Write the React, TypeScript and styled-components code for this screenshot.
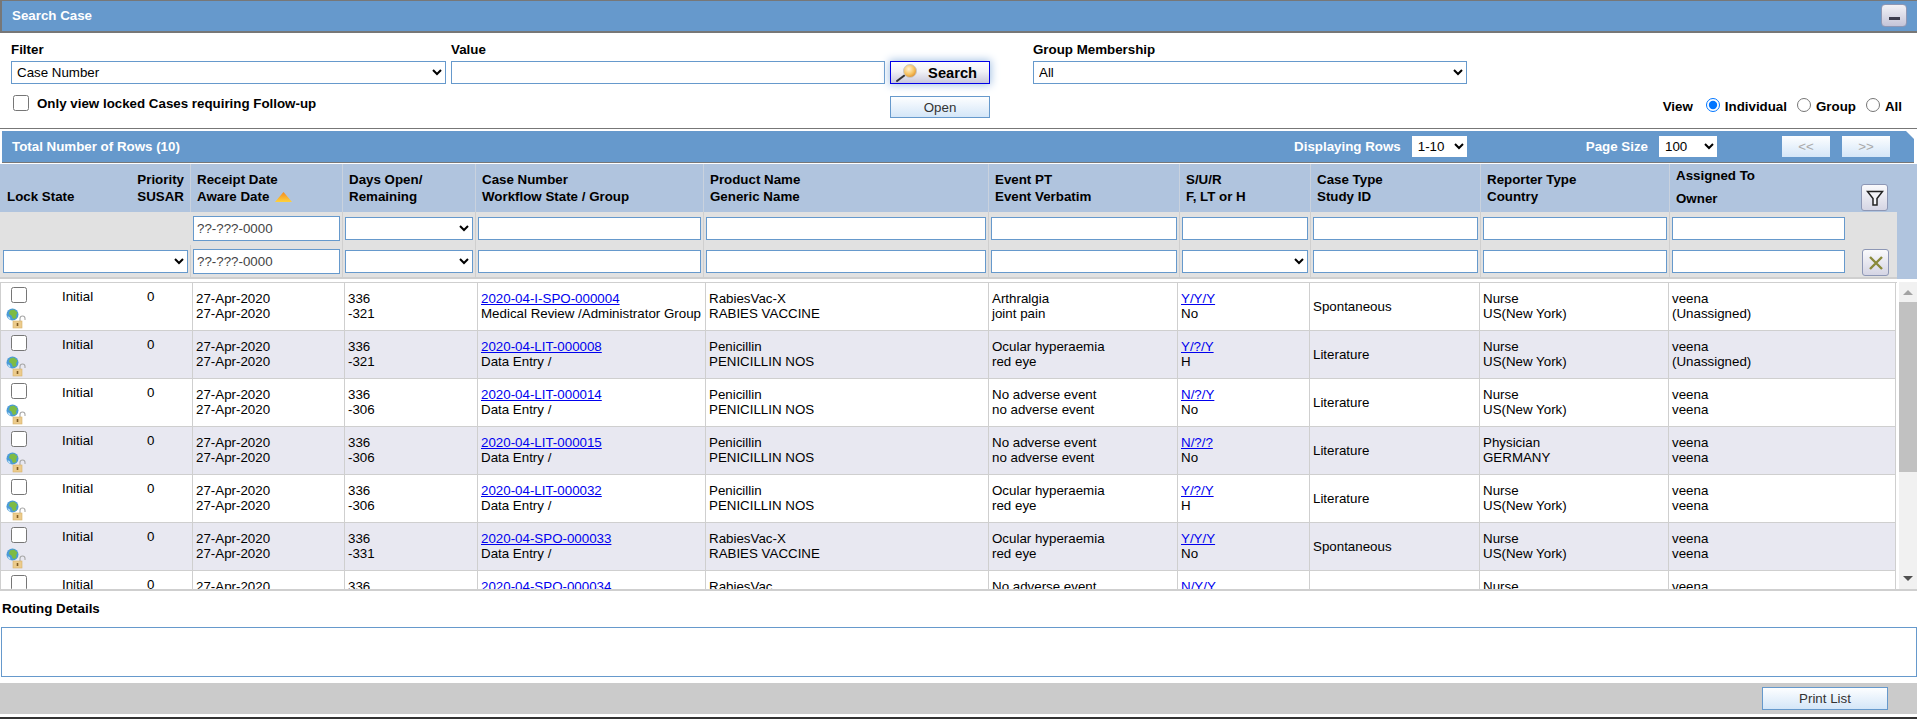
import { FC } from 'react'

import styled, { createGlobalStyle } from 'styled-components'

const HEAD_COLUMNS = '190px 152px 133px 228px 285px 191px 131px 170px 189px 227px'
const ROW_COLUMNS = '192px 152px 133px 228px 283px 189px 132px 170px 189px 227px'

const GlobalStyle = createGlobalStyle`
	html, body {
		margin: 0;
		padding: 0;
		background: #fff;
		overflow: hidden;
	}
	body, input, select, button {
		font-family: "Liberation Sans", Arial, sans-serif;
		font-size: 13.33px;
		color: #000;
	}
`

const Page = styled.div`
	width: 1917px;
	height: 719px;
	display: flex;
	flex-direction: column;
	overflow: hidden;
`

const TitleBar = styled.div`
	height: 30px;
	display: flex;
	align-items: center;
	justify-content: space-between;
	padding: 0 10px 0 10px;
	background: #6699cc;
	border-top: 1px solid #777;
	border-bottom: 2px solid #777;
	border-left: 2px solid #777;
	color: #fff;
	font-weight: bold;
`

const TitleText = styled.span`
	margin-bottom: 2px;
`

const SearchPanel = styled.div`
	display: grid;
	grid-template-columns: 435px 434px 100px 434px 1fr;
	grid-template-rows: 20px 23px 34px;
	column-gap: 5px;
	padding: 8px 15px 10px 11px;
	border-bottom: 1px solid #777;
	height: 77px;
`

const FieldLabel = styled.label<{ $indent?: boolean }>`
	font-weight: bold;
	line-height: 16px;
	margin-top: 1px;
	margin-left: ${(p) => (p.$indent ? '38px' : '0')};
`

const Select = styled.select<{ $indent?: boolean }>`
	height: 23px;
	box-sizing: border-box;
	width: ${(p) => (p.$indent ? '434px' : '100%')};
	margin-left: ${(p) => (p.$indent ? '38px' : '0')};
	padding: 0 0 0 1px;
	border: 1px solid #6699cc;
	border-radius: 0;
	background: #fff;
	outline: none;
`

const TextInput = styled.input<{ $dim?: boolean }>`
	box-sizing: border-box;
	width: 100%;
	height: ${(p) => (p.$dim ? '25px' : '23px')};
	padding: 0 3px;
	border: 1px solid #6699cc;
	border-radius: 0;
	background: #fff;
	color: #444;
	outline: none;
`

const SearchButton = styled.button`
	display: flex;
	align-items: center;
	justify-content: space-between;
	box-sizing: border-box;
	height: 23px;
	padding: 0 12px 0 4px;
	border: 1px solid #0000e6;
	background: linear-gradient(#fdfdfe 0%, #f1f1f6 45%, #c9c8dc 100%);
	box-shadow: 0 0 8px 1px #a4c2e4;
	font-size: 14.67px;
	font-weight: bold;
`

const PlainButton = styled.button`
	box-sizing: border-box;
	border: 1px solid #6699cc;
	background: linear-gradient(#fdfeff, #d4e6f8);
	color: #333;
	padding: 0;
`

const OpenButton = styled(PlainButton)`
	height: 22px;
	margin-top: 12px;
	grid-column: 3;
	grid-row: 3;
`

const LockedOption = styled.label`
	grid-column: 1 / 3;
	grid-row: 3;
	display: flex;
	align-items: center;
	gap: 8px;
	margin: 11px 0 0 2px;
	height: 16px;
	font-weight: bold;
`

const Check = styled.input`
	width: 16px;
	height: 16px;
	margin: 0;
	flex: none;
`

const ViewGroup = styled.div`
	grid-column: 5;
	grid-row: 3;
	display: flex;
	justify-content: flex-end;
	align-items: center;
	height: 16px;
	margin-top: 14px;
	font-weight: bold;
`

const ViewLabel = styled.span`
	margin-right: 3px;
`

const RadioLabel = styled.label`
	display: flex;
	align-items: center;
	gap: 5px;
	margin-left: 10px;
`

const Radio = styled.input`
	width: 14px;
	height: 14px;
	margin: 0 0 3px 0;
`

const ResultsBar = styled.div`
	margin: 2px 3px 0 2px;
	height: 31px;
	display: flex;
	align-items: center;
	padding-left: 10px;
	background: #6699cc;
	border-bottom: 1px solid #777;
	color: #fff;
	font-weight: bold;
	clip-path: polygon(0 0, calc(100% - 8px) 0, 100% 8px, 100% 100%, 0 100%);
`

const BarTitle = styled.span`
	flex: 1;
`

const BarLabel = styled.span<{ $gap: number }>`
	margin-right: ${(p) => p.$gap}px;
`

const BarSelect = styled.select<{ $width: number; $after: number }>`
	box-sizing: border-box;
	width: ${(p) => p.$width}px;
	height: 21px;
	margin-right: ${(p) => p.$after}px;
	padding: 0 0 0 2px;
	border: none;
	border-radius: 0;
	background: #fff;
	outline: none;
`

const PageButton = styled.button<{ $after: number }>`
	width: 48px;
	height: 21px;
	margin-right: ${(p) => p.$after}px;
	padding: 0;
	border: none;
	background: linear-gradient(#fdfeff, #d4e6f8);
	color: #a9a9a9;
`

const TableHead = styled.div`
	margin-top: 1px;
	background: #b0c4de;
`

const HeadRow = styled.div`
	display: grid;
	grid-template-columns: ${HEAD_COLUMNS};
	height: 48px;
	margin-left: 1px;
	width: 1896px;
	font-weight: bold;
`

const HeadCell = styled.div`
	box-sizing: border-box;
	display: flex;
	justify-content: space-between;
	padding: 0 9px 0 6px;
	border-right: 1px solid #c9d2de;
	line-height: 17px;
	&:last-child {
		border-right: none;
	}
`

const HeadText = styled.div<{ $wide?: boolean }>`
	align-self: center;
	line-height: ${(p) => (p.$wide ? '23px' : '17px')};
	margin-top: ${(p) => (p.$wide ? '-3px' : '0')};
`

const LockHead = styled(HeadCell)`
	padding-right: 6px;
`

const LockLabel = styled.span`
	align-self: flex-end;
	margin-bottom: 7px;
`

const Priority = styled.span`
	align-self: center;
	text-align: right;
`

const SortMark = styled.svg`
	width: 17px;
	height: 10px;
	margin-left: 6px;
	vertical-align: -1px;
`

const IconButton = styled.button<{ $top: number }>`
	box-sizing: border-box;
	width: 27px;
	height: 27px;
	margin-top: ${(p) => p.$top}px;
	padding: 0;
	display: flex;
	align-items: center;
	justify-content: center;
	border: 1px solid #8d97b5;
	border-radius: 3px;
	background: linear-gradient(#fafafc, #d5d5e4);
	flex: none;
`

const FilterArea = styled.div`
	width: 1897px;
	padding-left: 1px;
	box-sizing: border-box;
	background: #e1e1e1;
	border-bottom: 2px solid #cfcfcf;
`

const FilterRow = styled.div<{ $height: number; $pad: number }>`
	display: grid;
	grid-template-columns: ${HEAD_COLUMNS};
	height: ${(p) => p.$height}px;
	> div {
		padding-top: ${(p) => p.$pad}px;
	}
`

const FilterCell = styled.div<{ $bare?: boolean }>`
	box-sizing: border-box;
	display: flex;
	justify-content: space-between;
	align-items: flex-start;
	padding-left: 2px;
	padding-right: 2px;
	border-right: 1px solid ${(p) => (p.$bare ? 'transparent' : '#cfcfcf')};
	&:last-child {
		border-right: none;
		padding-right: 8px;
	}
`

const FilterSelect = styled(Select)`
	margin-top: 1px;
`

const FilterInput = styled(TextInput)`
	margin-top: 1px;
`

const OwnerInput = styled(FilterInput)`
	width: 173px;
`

const RowsArea = styled.div`
	display: flex;
	height: 307px;
	margin-top: 3px;
	border-bottom: 2px solid #cfcfcf;
`

const Rows = styled.div`
	width: 1897px;
	height: 307px;
	overflow: hidden;
	border-top: 1px solid #cfcfcf;
	box-sizing: border-box;
`

const Row = styled.div<{ $alt: boolean }>`
	display: grid;
	grid-template-columns: ${ROW_COLUMNS};
	height: 48px;
	box-sizing: border-box;
	border-bottom: 1px solid #cfcfcf;
	border-left: 1px solid #cfcfcf;
	background: ${(p) => (p.$alt ? '#e8e8f1' : '#fff')};
	width: 1896px;
	line-height: 15px;
`

const Cell = styled.div<{ $middle?: boolean }>`
	box-sizing: border-box;
	padding: ${(p) => (p.$middle ? '0' : '8px')} 0 0 3px;
	border-right: 1px solid #cfcfcf;
	white-space: nowrap;
	overflow: hidden;
	display: ${(p) => (p.$middle ? 'flex' : 'block')};
	align-items: center;
`

const LockCell = styled.div`
	box-sizing: border-box;
	display: flex;
	border-right: 1px solid #cfcfcf;
`

const LockIcons = styled.div`
	width: 61px;
	display: flex;
	flex-direction: column;
	align-items: flex-start;
	padding: 4px 0 0 10px;
	box-sizing: border-box;
`

const StatusIcon = styled.svg`
	width: 20px;
	height: 21px;
	margin: 5px 0 0 -5px;
	flex: none;
`

const StateText = styled.span`
	width: 85px;
	margin-top: 6px;
`

const SusarText = styled.span`
	margin-top: 6px;
`

const CaseLink = styled.a`
	color: #0000ee;
	text-decoration: underline;
`

const Line = styled.div``

const ScrollBar = styled.div`
	width: 18px;
	margin-left: 2px;
	height: 307px;
	background: #f1f1f1;
	display: flex;
	flex-direction: column;
	align-items: center;
`

const ArrowUp = styled.div`
	margin-top: 8px;
	width: 0;
	height: 0;
	border-left: 5px solid transparent;
	border-right: 5px solid transparent;
	border-bottom: 5px solid #a3a3a3;
`

const Thumb = styled.div`
	width: 18px;
	height: 170px;
	margin-top: 7px;
	background: #c1c1c1;
`

const ArrowDown = styled.div`
	margin-top: auto;
	margin-bottom: 8px;
	width: 0;
	height: 0;
	border-left: 5px solid transparent;
	border-right: 5px solid transparent;
	border-top: 5px solid #505050;
`

const RoutingLabel = styled.div`
	margin: 10px 0 10px 2px;
	line-height: 16px;
	font-weight: bold;
`

const RoutingBox = styled.textarea`
	display: block;
	box-sizing: border-box;
	width: 1916px;
	height: 50px;
	margin: 0 0 0 1px;
	padding: 2px;
	border: 1px solid #6699cc;
	border-radius: 0;
	resize: none;
	outline: none;
`

const Footer = styled.div`
	margin-top: 6px;
	height: 31px;
	display: flex;
	align-items: center;
	justify-content: flex-end;
	padding-right: 29px;
	background: #cbcbcb;
`

const PrintButton = styled(PlainButton)`
	width: 126px;
	height: 23px;
`

const BottomEdge = styled.div`
	margin-top: 3px;
	height: 2px;
	background: #333;
`

const MinimizeButton = styled.button`
	box-sizing: border-box;
	width: 26px;
	height: 23px;
	padding: 12px 0 0;
	margin-bottom: 2px;
	display: flex;
	justify-content: center;
	border: 1px solid #8d97b5;
	border-radius: 4px;
	background: linear-gradient(#f2f2f6, #c4c4d8);
`

const MinimizeDash = styled.span`
	width: 11px;
	height: 3px;
	background: #3d3d4d;
`

const Magnifier: FC = () => (
	<svg width="26" height="20" viewBox="0 0 26 20">
		<defs>
			<radialGradient id="lens" cx="0.4" cy="0.35" r="0.7">
				<stop offset="0" stopColor="#fff3d6" />
				<stop offset="0.6" stopColor="#f7c25f" />
				<stop offset="1" stopColor="#d9892a" />
			</radialGradient>
		</defs>
		<line x1="2" y1="18" x2="10" y2="12" stroke="#333" strokeWidth="2" strokeLinecap="round" />
		<circle cx="15" cy="8" r="6.5" fill="url(#lens)" stroke="#c9c9c9" strokeWidth="1" />
	</svg>
)

const StatusGlyph: FC = () => (
	<StatusIcon viewBox="0 0 20 21">
		<circle cx="6.5" cy="6.5" r="6" fill="#4a9bd8" />
		<path d="M4 2.5 L8 1.5 L11.5 4.5 L10 7.5 L10.5 10 L7 11 L5.5 7.5 L3 6 Z" fill="#7dbb45" />
		<path d="M1.5 8 L4 9.5 L4.5 12 L2.5 10.5 Z" fill="#bfe0f5" />
		<path d="M14 13 V10.5 A2.5 2.5 0 0 1 19 10.5 V12" fill="none" stroke="#a8a8a8" strokeWidth="1.1" />
		<rect x="7" y="13" width="9" height="7" fill="#eccb8c" stroke="#d8b26a" strokeWidth="0.6" />
		<rect x="10.7" y="15" width="1.6" height="3" fill="#7d5a22" />
	</StatusIcon>
)

const rows = [
	{ id: '2020-04-I-SPO-000004', flow: 'Medical Review /Administrator Group', left: '-321', product: 'RabiesVac-X', generic: 'RABIES VACCINE', pt: 'Arthralgia', verbatim: 'joint pain', sur: 'Y/Y/Y', flt: 'No', type: 'Spontaneous', reporter: 'Nurse', country: 'US(New York)', owner: '(Unassigned)' },
	{ id: '2020-04-LIT-000008', flow: 'Data Entry /', left: '-321', product: 'Penicillin', generic: 'PENICILLIN NOS', pt: 'Ocular hyperaemia', verbatim: 'red eye', sur: 'Y/?/Y', flt: 'H', type: 'Literature', reporter: 'Nurse', country: 'US(New York)', owner: '(Unassigned)' },
	{ id: '2020-04-LIT-000014', flow: 'Data Entry /', left: '-306', product: 'Penicillin', generic: 'PENICILLIN NOS', pt: 'No adverse event', verbatim: 'no adverse event', sur: 'N/?/Y', flt: 'No', type: 'Literature', reporter: 'Nurse', country: 'US(New York)', owner: 'veena' },
	{ id: '2020-04-LIT-000015', flow: 'Data Entry /', left: '-306', product: 'Penicillin', generic: 'PENICILLIN NOS', pt: 'No adverse event', verbatim: 'no adverse event', sur: 'N/?/?', flt: 'No', type: 'Literature', reporter: 'Physician', country: 'GERMANY', owner: 'veena' },
	{ id: '2020-04-LIT-000032', flow: 'Data Entry /', left: '-306', product: 'Penicillin', generic: 'PENICILLIN NOS', pt: 'Ocular hyperaemia', verbatim: 'red eye', sur: 'Y/?/Y', flt: 'H', type: 'Literature', reporter: 'Nurse', country: 'US(New York)', owner: 'veena' },
	{ id: '2020-04-SPO-000033', flow: 'Data Entry /', left: '-331', product: 'RabiesVac-X', generic: 'RABIES VACCINE', pt: 'Ocular hyperaemia', verbatim: 'red eye', sur: 'Y/Y/Y', flt: 'No', type: 'Spontaneous', reporter: 'Nurse', country: 'US(New York)', owner: 'veena' },
	{ id: '2020-04-SPO-000034', flow: 'Data Entry /', left: '-331', product: 'RabiesVac', generic: 'RABIES VACCINE', pt: 'No adverse event', verbatim: 'no adverse event', sur: 'N/Y/Y', flt: 'No', type: 'Spontaneous', reporter: 'Nurse', country: 'US(New York)', owner: 'veena' },
]

const App: FC = () => {
	return (
		<Page>
			<GlobalStyle />
			<TitleBar>
				<TitleText>Search Case</TitleText>
				<MinimizeButton aria-label="Minimize">
					<MinimizeDash />
				</MinimizeButton>
			</TitleBar>

			<SearchPanel>
				<FieldLabel>Filter</FieldLabel>
				<FieldLabel>Value</FieldLabel>
				<span />
				<FieldLabel $indent>Group Membership</FieldLabel>
				<span />

				<Select defaultValue="case">
					<option value="case">Case Number</option>
				</Select>
				<TextInput />
				<SearchButton>
					<Magnifier />
					Search
				</SearchButton>
				<Select $indent defaultValue="all">
					<option value="all">All</option>
				</Select>
				<span />

				<LockedOption>
					<Check type="checkbox" />
					Only view locked Cases requiring Follow-up
				</LockedOption>
				<OpenButton>Open</OpenButton>
				<ViewGroup>
					<ViewLabel>View</ViewLabel>
					<RadioLabel>
						<Radio type="radio" name="view" defaultChecked />
						Individual
					</RadioLabel>
					<RadioLabel>
						<Radio type="radio" name="view" />
						Group
					</RadioLabel>
					<RadioLabel>
						<Radio type="radio" name="view" />
						All
					</RadioLabel>
				</ViewGroup>
			</SearchPanel>

			<ResultsBar>
				<BarTitle>Total Number of Rows (10)</BarTitle>
				<BarLabel $gap={11}>Displaying Rows</BarLabel>
				<BarSelect $width={55} $after={119} defaultValue="1-10">
					<option>1-10</option>
				</BarSelect>
				<BarLabel $gap={11}>Page Size</BarLabel>
				<BarSelect $width={58} $after={65} defaultValue="100">
					<option>100</option>
				</BarSelect>
				<PageButton $after={12} disabled>&lt;&lt;</PageButton>
				<PageButton $after={24} disabled>&gt;&gt;</PageButton>
			</ResultsBar>

			<TableHead>
				<HeadRow>
					<LockHead>
						<LockLabel>Lock State</LockLabel>
						<Priority>
							Priority
							<br />
							SUSAR
						</Priority>
					</LockHead>
					<HeadCell>
						<HeadText>
							Receipt Date
							<br />
							Aware Date
							<SortMark viewBox="0 0 17 10">
								<defs>
									<linearGradient id="sortFill" x1="0" y1="0" x2="0" y2="1">
										<stop offset="0" stopColor="#f58a1f" />
										<stop offset="1" stopColor="#ffd23c" />
									</linearGradient>
								</defs>
								<polygon points="8.5,0 17,10 0,10" fill="url(#sortFill)" />
							</SortMark>
						</HeadText>
					</HeadCell>
					<HeadCell>
						<HeadText>
							Days Open/
							<br />
							Remaining
						</HeadText>
					</HeadCell>
					<HeadCell>
						<HeadText>
							Case Number
							<br />
							Workflow State / Group
						</HeadText>
					</HeadCell>
					<HeadCell>
						<HeadText>
							Product Name
							<br />
							Generic Name
						</HeadText>
					</HeadCell>
					<HeadCell>
						<HeadText>
							Event PT
							<br />
							Event Verbatim
						</HeadText>
					</HeadCell>
					<HeadCell>
						<HeadText>
							S/U/R
							<br />
							F, LT or H
						</HeadText>
					</HeadCell>
					<HeadCell>
						<HeadText>
							Case Type
							<br />
							Study ID
						</HeadText>
					</HeadCell>
					<HeadCell>
						<HeadText>
							Reporter Type
							<br />
							Country
						</HeadText>
					</HeadCell>
					<HeadCell>
						<HeadText $wide>
							Assigned To
							<br />
							Owner
						</HeadText>
						<IconButton $top={20} aria-label="Filter">
							<svg width="18" height="18" viewBox="0 0 18 18">
								<path d="M1.5 2.5 H16.5 L11 9.5 V16 H7 V9.5 Z" fill="#f4f4f8" stroke="#222" strokeWidth="1.5" />
							</svg>
						</IconButton>
					</HeadCell>
				</HeadRow>

				<FilterArea>
					<FilterRow $height={33} $pad={4}>
						<FilterCell $bare />
						<FilterCell>
							<TextInput $dim defaultValue="??-???-0000" />
						</FilterCell>
						<FilterCell>
							<FilterSelect />
						</FilterCell>
						<FilterCell>
							<FilterInput />
						</FilterCell>
						<FilterCell>
							<FilterInput />
						</FilterCell>
						<FilterCell>
							<FilterInput />
						</FilterCell>
						<FilterCell>
							<FilterInput />
						</FilterCell>
						<FilterCell>
							<FilterInput />
						</FilterCell>
						<FilterCell>
							<FilterInput />
						</FilterCell>
						<FilterCell>
							<OwnerInput />
						</FilterCell>
					</FilterRow>
					<FilterRow $height={32} $pad={4}>
						<FilterCell>
							<FilterSelect />
						</FilterCell>
						<FilterCell>
							<TextInput $dim defaultValue="??-???-0000" />
						</FilterCell>
						<FilterCell>
							<FilterSelect />
						</FilterCell>
						<FilterCell>
							<FilterInput />
						</FilterCell>
						<FilterCell>
							<FilterInput />
						</FilterCell>
						<FilterCell>
							<FilterInput />
						</FilterCell>
						<FilterCell>
							<FilterSelect />
						</FilterCell>
						<FilterCell>
							<FilterInput />
						</FilterCell>
						<FilterCell>
							<FilterInput />
						</FilterCell>
						<FilterCell>
							<OwnerInput />
							<IconButton $top={0} aria-label="Clear">
								<svg width="18" height="18" viewBox="0 0 18 18">
									<path d="M3 3 L15 15 M15 3 L3 15" stroke="#8a8a3a" strokeWidth="2.4" />
								</svg>
							</IconButton>
						</FilterCell>
					</FilterRow>
				</FilterArea>
			</TableHead>

			<RowsArea>
				<Rows>
					{rows.map((row, i) => (
						<Row key={row.id} $alt={i % 2 === 1}>
							<LockCell>
								<LockIcons>
									<Check type="checkbox" />
									<StatusGlyph />
								</LockIcons>
								<StateText>Initial</StateText>
								<SusarText>0</SusarText>
							</LockCell>
							<Cell>
								<Line>27-Apr-2020</Line>
								<Line>27-Apr-2020</Line>
							</Cell>
							<Cell>
								<Line>336</Line>
								<Line>{row.left}</Line>
							</Cell>
							<Cell>
								<Line>
									<CaseLink href="#">{row.id}</CaseLink>
								</Line>
								<Line>{row.flow}</Line>
							</Cell>
							<Cell>
								<Line>{row.product}</Line>
								<Line>{row.generic}</Line>
							</Cell>
							<Cell>
								<Line>{row.pt}</Line>
								<Line>{row.verbatim}</Line>
							</Cell>
							<Cell>
								<Line>
									<CaseLink href="#">{row.sur}</CaseLink>
								</Line>
								<Line>{row.flt}</Line>
							</Cell>
							<Cell $middle>{row.type}</Cell>
							<Cell>
								<Line>{row.reporter}</Line>
								<Line>{row.country}</Line>
							</Cell>
							<Cell>
								<Line>veena</Line>
								<Line>{row.owner}</Line>
							</Cell>
						</Row>
					))}
				</Rows>
				<ScrollBar>
					<ArrowUp />
					<Thumb />
					<ArrowDown />
				</ScrollBar>
			</RowsArea>

			<RoutingLabel>Routing Details</RoutingLabel>
			<RoutingBox />
			<Footer>
				<PrintButton>Print List</PrintButton>
			</Footer>
			<BottomEdge />
		</Page>
	)
}

export default App
